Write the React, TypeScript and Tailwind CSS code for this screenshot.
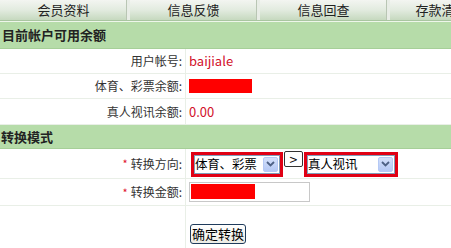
const font = "font-['Noto_Sans_CJK_SC','Noto_Sans',sans-serif]";

function Tab({ label, w = "w-[130px]" }: { label: string; w?: string }) {
  return (
    <div className={`${w} shrink-0 flex items-center justify-center border-r-[3px] border-r-[#e8ede6] shadow-[inset_-1px_0_0_#b9c6b4] text-[13px] text-[#222] whitespace-nowrap`}>
      {label}
    </div>
  );
}

function Row({ label, star, children, h }: { label: string; star?: boolean; children: React.ReactNode; h: string }) {
  return (
    <div className={`grid grid-cols-[186px_1fr] border-b border-[#e9efe7] ${h}`}>
      <div className="flex items-center justify-end pr-[3px] border-r border-[#e9efe7] text-[12px] text-[#333] whitespace-nowrap">
        {star && <span className="text-[#e0102a] mr-[3px] text-[11px]">*</span>}
        {label}:
      </div>
      <div className="flex items-center pl-[3px]">{children}</div>
    </div>
  );
}

function Select({ text, w }: { text: string; w: string }) {
  return (
    <div className={`border-[3px] border-[#e00014] h-[25px] ${w} flex`}>
      <div className="flex-1 flex items-center bg-white border border-[#7f9db9] min-w-0">
        <span className="flex-1 text-[12.5px] leading-none text-black whitespace-nowrap tracking-[-0.2px]">{text}</span>
        <span className="w-[15px] h-[15px] shrink-0 mr-[1px] rounded-[2px] bg-gradient-to-b from-[#d4e0fb] to-[#b4c8f4] border border-[#b5c9f5] flex items-center justify-center">
          <svg width="9" height="6" viewBox="0 0 9 6">
            <path d="M1 1 L4.5 4.5 L8 1" stroke="#4d6185" strokeWidth="1.8" fill="none" />
          </svg>
        </span>
      </div>
    </div>
  );
}

export default function App() {
  return (
    <div className={`w-[451px] h-[248px] overflow-hidden bg-white ${font}`}>
      <div className="w-[560px]">
        <div className="h-[21px] flex bg-gradient-to-b from-[#f3f5f1] via-[#e2ebdf] to-[#c6d9bf] border-b border-[#a9c6a0]">
          <Tab label="会员资料" />
          <Tab label="信息反馈" />
          <Tab label="信息回查" />
          <Tab label="存款清单" w="w-[106px]" />
        </div>
        <div className="h-px bg-[#eef6ea]" />
        <div className="h-[27px] bg-[#b6dca9] flex items-center pl-[2px] text-[13px] font-bold text-[#222] border-b border-[#a6cf98]">
          目前帐户可用余额
        </div>
        <Row label="用户帐号" h="h-[25px]">
          <span className="text-[13px] text-[#d2102a]">baijiale</span>
        </Row>
        <Row label="体育、彩票余额" h="h-[25px]">
          <div className="w-[63px] h-[14px] bg-[#ff0000]" />
        </Row>
        <Row label="真人视讯余额" h="h-[26px]">
          <span className="text-[13px] text-[#d2102a]">0.00</span>
        </Row>
        <div className="h-[24px] bg-[#b6dca9] flex items-center pl-[1px] text-[13px] font-bold text-[#222] border-b border-[#a6cf98]">
          转换模式
        </div>
        <Row label="转换方向" star h="h-[30px]">
          <div className="flex items-start gap-[1px] pl-[2px] pt-[1px]">
            <Select text="体育、彩票" w="w-[92px]" />
            <button className="w-[19px] h-[16px] -mt-[1px] border border-[#333] rounded-[2px] bg-white text-[14px] leading-none flex items-center justify-center">
              &gt;
            </button>
            <Select text="真人视讯" w="w-[94px]" />
          </div>
        </Row>
        <Row label="转换金额" star h="h-[27px]">
          <div className="w-[121px] h-[20px] border border-[#c8c8c8] bg-white p-[1px]">
            <div className="w-[64px] h-[15px] bg-[#ff0000]" />
          </div>
        </Row>
        <div className="grid grid-cols-[186px_1fr] h-[42px]">
          <div className="border-r border-[#e9efe7]" />
          <div className="pl-[4px] pt-[14px]">
            <button className="w-[56px] h-[20px] px-0 border border-[#1f3b5b] rounded-[3px] bg-gradient-to-b from-[#ffffff] to-[#ecebe4] text-[13px] leading-none text-black whitespace-nowrap">
              确定转换
            </button>
          </div>
        </div>
      </div>
    </div>
  );
}
